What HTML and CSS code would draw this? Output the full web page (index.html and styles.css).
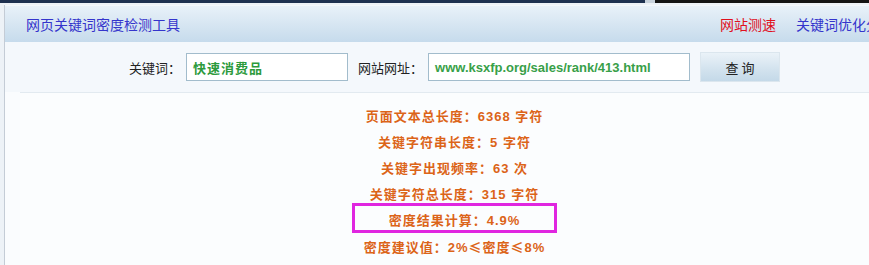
FILE: index.html
```html
<!DOCTYPE html>
<html lang="zh-CN">
<head>
<meta charset="utf-8">
<title>网页关键词密度检测工具</title>
<link rel="stylesheet" href="styles.css">
</head>
<body>
<div class="topbar">
  <span class="seg seg-navy"></span>
  <span class="seg seg-gap"></span>
  <span class="seg seg-black"></span>
</div>
<div class="page">
  <div class="panel">
    <div class="header">
      <div class="title">网页关键词密度检测工具</div>
      <div class="nav">
        <a class="nav-link nav-red">网站测速</a>
        <a class="nav-link">关键词优化分析</a>
      </div>
    </div>
    <div class="form-row">
      <span class="label">关键词：</span>
      <div class="input input-kw">快速消费品</div>
      <span class="label label-url">网站网址：</span>
      <div class="input input-url">www.ksxfp.org/sales/rank/413.html</div>
      <button class="btn">查 询</button>
    </div>
    <div class="results">
      <div class="line">页面文本总长度：6368 字符</div>
      <div class="line">关键字符串长度：5 字符</div>
      <div class="line">关键字出现频率：63 次</div>
      <div class="line">关键字符总长度：315 字符</div>
      <div class="line line-box">密度结果计算：4.9%</div>
      <div class="line">密度建议值：2%<span class="cjk">≤</span>密度<span class="cjk">≤</span>8%</div>
    </div>
  </div>
</div>
</body>
</html>
```
FILE: styles.css
```css
html, body {
  margin: 0;
  padding: 0;
  height: 265px;
  overflow: hidden;
  background: #fafcfe;
  font-family: "Liberation Sans", "Noto Sans CJK SC", sans-serif;
}

.topbar {
  display: flex;
  height: 3px;
}
.seg { display: block; height: 3px; }
.seg-navy { width: 645px; background: #1e3150; }
.seg-gap { width: 10px; background: #c8d2dc; }
.seg-black { flex: 1; background: #141414; }

.page {
  background: #edf2f7;
  padding-left: 4px;
  padding-top: 2px;
}

.panel {
  border-left: 1px solid #c4ccd6;
  background: #fafcfe;
  overflow: hidden;
  height: 260px;
}

.header {
  display: flex;
  align-items: center;
  height: 36px;
  border-top: 1px solid #f4f8fc;
  background: linear-gradient(to bottom, #e8f1f9 0%, #d7e6f2 50%, #c6dbec 100%);
}
.title {
  flex: 1;
  padding-left: 21px;
  font-size: 14px;
  color: #3535cc;
  white-space: nowrap;
}
.nav {
  width: 149px;
  flex: 0 0 149px;
  display: flex;
  gap: 20px;
  white-space: nowrap;
  overflow: hidden;
}
.nav-link {
  font-size: 14px;
  color: #3535cc;
  flex: 0 0 auto;
}
.nav-red { color: #e0101e; }

.form-row {
  display: flex;
  align-items: center;
  height: 30px;
  padding: 10px 0 10px 124px;
  background: #f4f8fc;
}
.label {
  font-size: 13px;
  color: #222;
  margin-right: 5px;
  white-space: nowrap;
}
.label-url { margin-left: 10px; margin-right: 5px; }
.input {
  box-sizing: border-box;
  height: 28px;
  border: 1px solid #a2bccc;
  background: #fff;
  padding-left: 6px;
  display: flex;
  align-items: center;
  font-size: 13px;
  font-weight: bold;
  color: #2c9a3c;
  white-space: nowrap;
}
.input-kw { width: 162px; letter-spacing: 1px; }
.input-url { width: 262px; color: #38a048; }
.btn {
  box-sizing: border-box;
  width: 80px;
  height: 30px;
  margin-left: 10px;
  border: 1px solid #dbe6ee;
  background: linear-gradient(to bottom, #eaf2f8 0%, #d2e2ee 60%, #c4d9e8 100%);
  font-family: "Noto Sans CJK SC", sans-serif;
  font-size: 13px;
  color: #222;
  padding: 0;
}

.results {
  margin-left: 15px;
  border-top: 1px solid #e2eaf0;
  padding-top: 11px;
  background: #fbfdfe;
}
.line {
  height: 26px;
  line-height: 26px;
  padding-left: 20px;
  text-align: center;
  font-size: 13px;
  font-weight: bold;
  letter-spacing: 1px;
  color: #dc6418;
  white-space: nowrap;
}
.line-box {
  box-sizing: content-box;
  width: 199px;
  height: 18px;
  line-height: 18px;
  padding: 6px 0 0 0;
  margin: -5px 0 1px 332px;
  border: 3px solid #e026e0;
}
.cjk {
  font-family: "Noto Sans CJK SC", sans-serif;
}
```
